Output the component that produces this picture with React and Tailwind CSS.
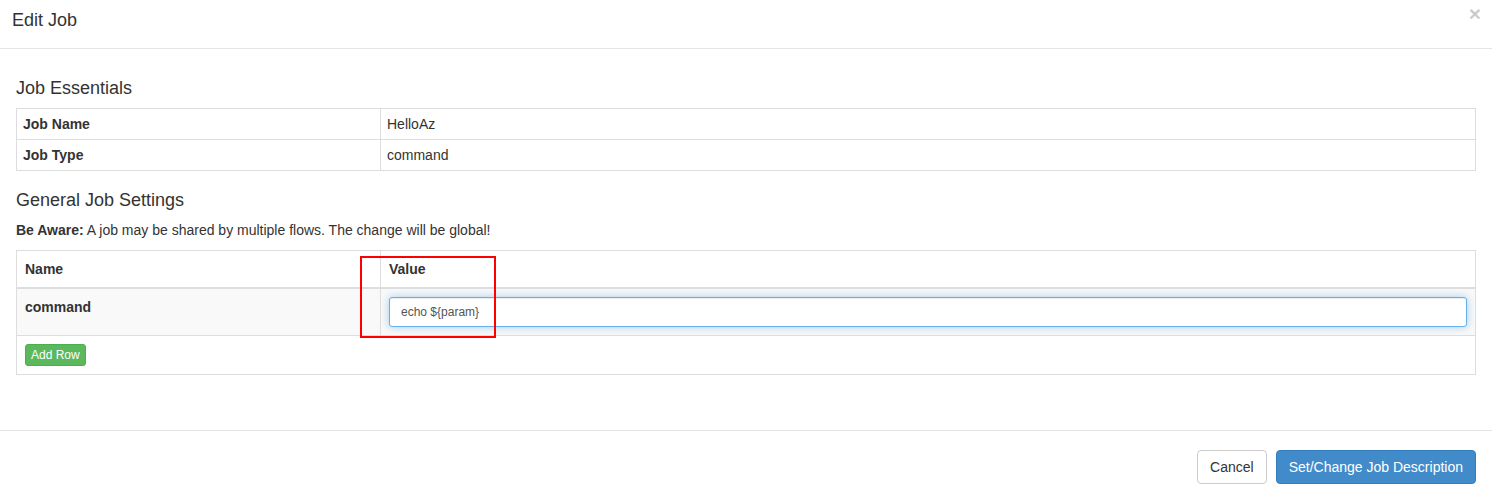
import React from "react";

const cell = "border border-[#ddd] px-[6px] py-[5px] leading-[20px] align-top";

export default function App() {
  return (
    <div className="relative w-[1492px] h-[497px] bg-white text-[#333] text-[14px] overflow-hidden font-['Liberation_Sans',Arial,sans-serif]">
      {/* header */}
      <div className="relative h-[49px] border-b border-[#e5e5e5] px-3 pt-[8px]">
        <h4 className="text-[18px] leading-[24px] font-normal">Edit Job</h4>
        <button className="absolute right-[11px] top-[3px] text-[21px] font-bold leading-[21px] text-black opacity-20">×</button>
      </div>

      {/* body */}
      <div className="h-[381px] px-4 pt-[29px]">
        <h4 className="mb-[10px] text-[18px] leading-[20px] font-normal">Job Essentials</h4>
        <table className="w-full border-collapse">
          <tbody>
            <tr>
              <td className={`${cell} w-[364px] font-bold`}>Job Name</td>
              <td className={cell}>HelloAz</td>
            </tr>
            <tr>
              <td className={`${cell} font-bold`}>Job Type</td>
              <td className={cell}>command</td>
            </tr>
          </tbody>
        </table>

        <h4 className="mt-[19px] mb-[11px] text-[18px] leading-[20px] font-normal">General Job Settings</h4>
        <p className="text-[14px] leading-[18px] mb-[11px]">
          <strong>Be Aware:</strong> A job may be shared by multiple flows. The change will be global!
        </p>

        <table className="w-full border-collapse">
          <thead>
            <tr>
              <th className="w-[364px] border border-[#ddd] border-b-2 px-2 py-2 leading-[20px] text-left font-bold">Name</th>
              <th className="border border-[#ddd] border-b-2 px-2 py-2 leading-[20px] text-left font-bold">Value</th>
            </tr>
          </thead>
          <tbody>
            <tr className="bg-[#f9f9f9]">
              <td className="border border-[#ddd] px-2 py-2 leading-[20px] align-top font-bold">command</td>
              <td className="border border-[#ddd] px-2 py-2 align-top">
                <input
                  defaultValue="echo ${param}"
                  className="block w-full h-[30px] px-[11px] text-[12px] text-[#555] bg-white border border-[#66afe9] rounded-[3px] outline-none shadow-[inset_0_1px_1px_rgba(0,0,0,0.075),0_0_8px_rgba(102,175,233,0.6)]"
                />
              </td>
            </tr>
            <tr>
              <td colSpan={2} className="border border-[#ddd] px-2 py-2 leading-[20px]">
                <button className="h-[22px] px-[5px] text-[12px] leading-[18px] text-white bg-[#5cb85c] border border-[#4cae4c] rounded-[3px]">
                  Add Row
                </button>
              </td>
            </tr>
          </tbody>
        </table>
      </div>

      {/* footer */}
      <div className="border-t border-[#e5e5e5] pt-[19px] pr-4 flex justify-end gap-[9px]">
        <button className="h-[34px] px-3 text-[14px] leading-[20px] text-[#333] bg-white border border-[#ccc] rounded-[4px]">
          Cancel
        </button>
        <button className="h-[34px] px-3 text-[14px] leading-[20px] text-white bg-[#428bca] border border-[#357ebd] rounded-[4px]">
          Set/Change Job Description
        </button>
      </div>

      {/* annotation */}
      <div className="absolute left-[360px] top-[256px] w-[136px] h-[82px] border-2 border-[#ff0000] pointer-events-none" />
    </div>
  );
}
